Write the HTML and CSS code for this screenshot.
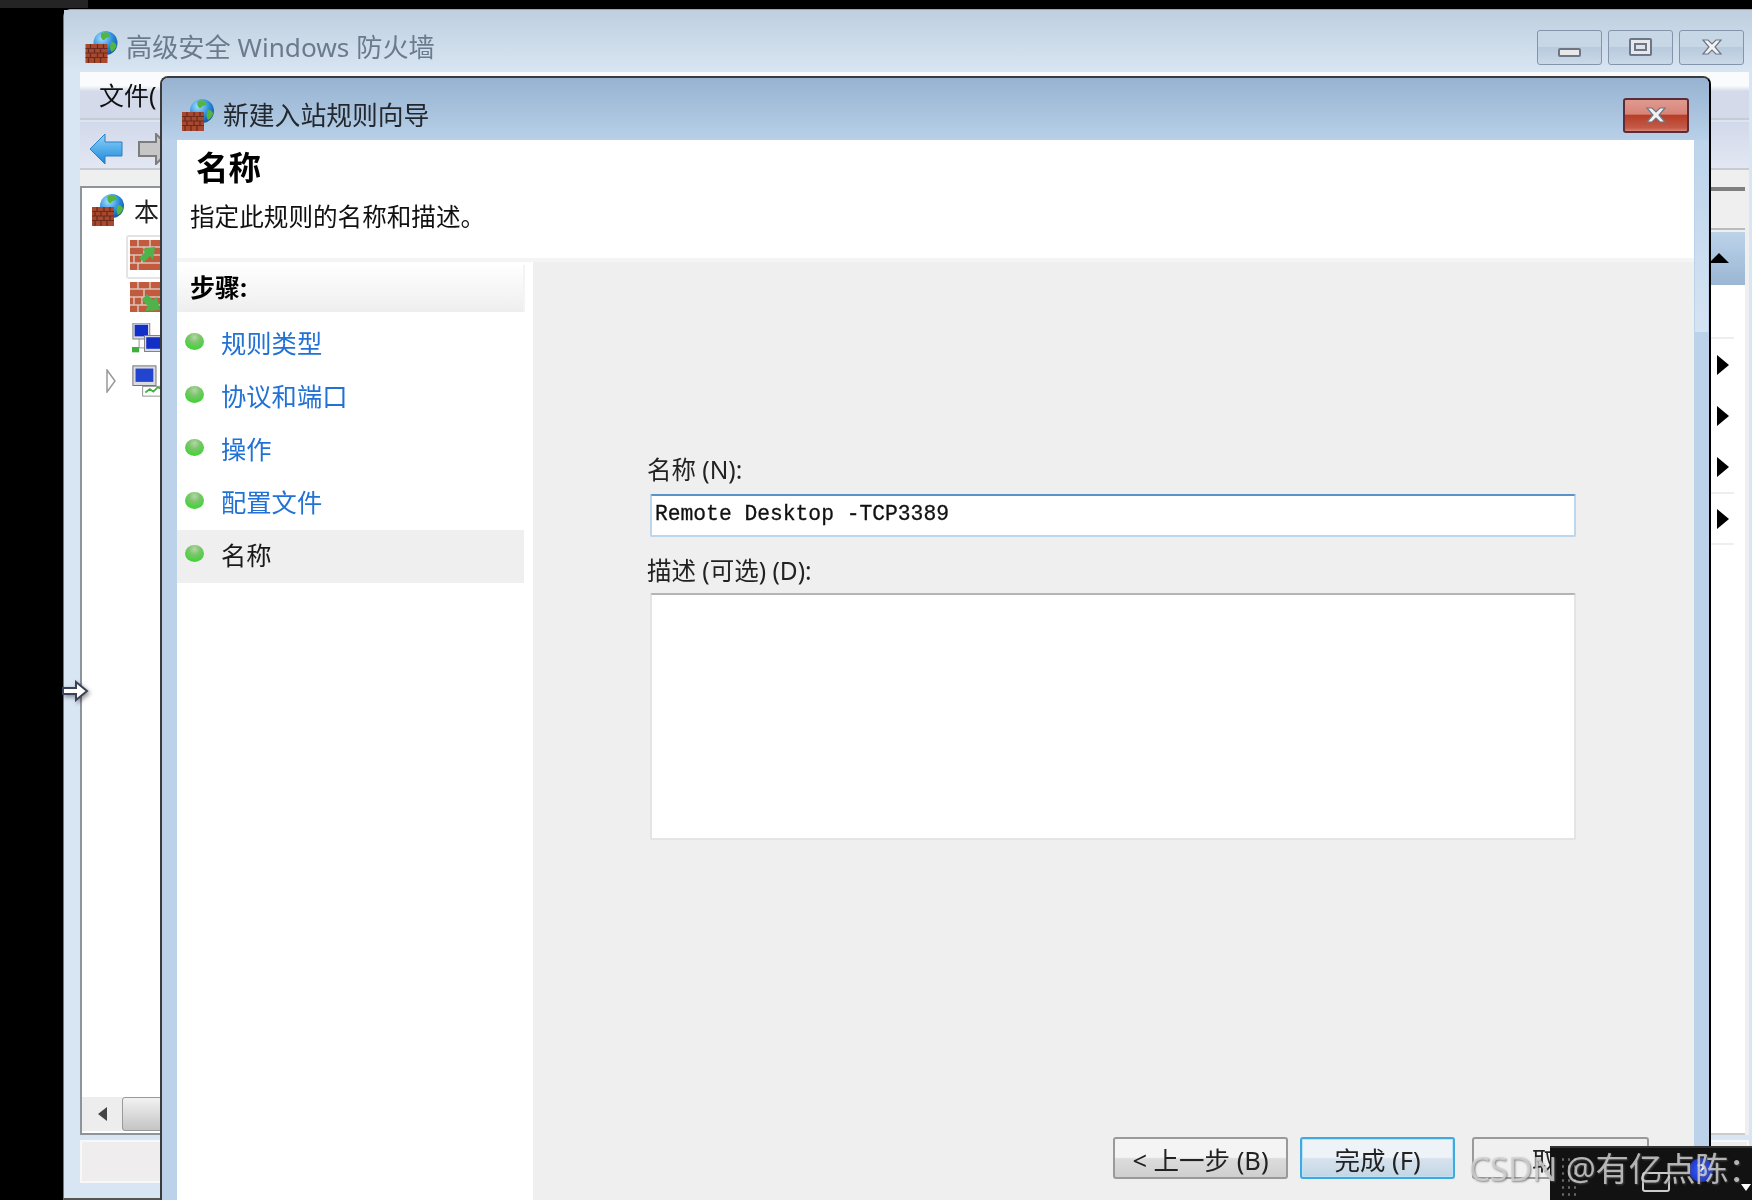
FILE: index.html
```html
<!DOCTYPE html>
<html lang="zh-CN">
<head>
<meta charset="utf-8">
<title>新建入站规则向导</title>
<link rel="stylesheet" href="styles.css">
</head>
<body>
<svg class="defs" width="0" height="0" aria-hidden="true">
  <defs>
    <radialGradient id="globe" cx="0.35" cy="0.3" r="0.8">
      <stop offset="0" stop-color="#a8e0ff"/><stop offset="0.55" stop-color="#2c8fe0"/><stop offset="1" stop-color="#10508f"/>
    </radialGradient>
    <linearGradient id="arrowblue" x1="0" y1="0" x2="0" y2="1">
      <stop offset="0" stop-color="#8fd4fa"/><stop offset="1" stop-color="#1c86d8"/>
    </linearGradient>
    <symbol id="fw" viewBox="0 0 32 32">
      <circle cx="20" cy="12" r="12" fill="url(#globe)"/>
      <path d="M16 2c4-2 8 0 9 3-2 2-5 1-6 4-2 1-5-3-3-7zM26 11c3 0 5 2 5 4-1 3-3 5-5 6-2-3-2-7 0-10z" fill="#55b63f"/>
      <rect x="0" y="13" width="22" height="19" fill="#a8492f"/>
      <path d="M0 17.500h22M0 22h22M0 26.500h22M5 13v4.500M12 13v4.500M18 13v4.500M3 17.500V22M9 17.500V22M15 17.500V22M5 22v4.500M12 22v4.500M18 22v4.500M3 26.500V32M9 26.500V32M15 26.500V32" stroke="#6a2a1c" stroke-width="1.200" fill="none"/>
    </symbol>
    <symbol id="brick-in" viewBox="0 0 36 30">
      <rect width="36" height="30" fill="#c25a3e"/>
      <path d="M0 7h36M0 15h36M0 23h36M8 0v7M20 0v7M14 7v8M4 15v8M12 15v8M8 23v7" stroke="#d9c4ba" stroke-width="1.500" fill="none"/>
      <path d="M12 9l13-2-2 13-3-4-6 6-5-4 6-6z" fill="#4db34a"/>
    </symbol>
    <symbol id="brick-out" viewBox="0 0 36 30">
      <rect width="36" height="30" fill="#c25a3e"/>
      <path d="M0 7h36M0 15h36M0 23h36M8 0v7M20 0v7M14 7v8M4 15v8M12 15v8M8 23v7" stroke="#d9c4ba" stroke-width="1.500" fill="none"/>
      <path d="M30 28l-15 1 3-5-6-6 5-6 6 6 4-3z" fill="#4db34a"/>
    </symbol>
    <symbol id="netpc" viewBox="0 0 36 36">
      <rect x="1" y="0" width="19" height="18" fill="#d8dbe2" stroke="#777"/>
      <rect x="3" y="2" width="15" height="13" fill="#1230c8"/>
      <rect x="14" y="14" width="20" height="18" fill="#d8dbe2" stroke="#777"/>
      <rect x="16" y="16" width="16" height="13" fill="#1230c8"/>
      <rect x="0" y="27" width="8" height="6" fill="#3fae3f"/>
      <path d="M8 18v10h6" stroke="#888" fill="none"/>
    </symbol>
    <symbol id="monpc" viewBox="0 0 36 36">
      <rect x="1" y="1" width="26" height="22" fill="#d8dbe2" stroke="#666"/>
      <rect x="4" y="4" width="20" height="15" fill="#2344cf"/>
      <rect x="12" y="24" width="24" height="11" fill="#fff" stroke="#888"/>
      <path d="M15 31l5-4 4 3 5-5 4 2" stroke="#3fae3f" stroke-width="2" fill="none"/>
    </symbol>
    <symbol id="x" viewBox="0 0 24 16">
      <path d="M3 1h5l4 4 4-4h5l-6 7 6 7h-5l-4-4-4 4H3l6-7z" fill="#f2f2f2" stroke="#6d7686" stroke-width="1.200"/>
    </symbol>
  </defs>
</svg>

<div class="screen">
  <div class="topstrip"></div>

  <section class="win-main">
    <header class="main-title">
      <svg class="ico-title"><use href="#fw"/></svg>
      <span class="main-title-text">高级安全 Windows 防火墙</span>
      <div class="caption">
        <span class="cap-btn"><i class="glyph-min"></i></span>
        <span class="cap-btn"><i class="glyph-max"></i></span>
        <span class="cap-btn"><svg class="glyph-x"><use href="#x"/></svg></span>
      </div>
    </header>
    <div class="main-client">
      <div class="menu-bar"><span class="menu-item">文件(</span></div>
      <div class="tool-bar">
        <svg class="tool-arrow" viewBox="0 0 34 32"><path d="M1 16L16 1v8h17v14H16v8z" fill="url(#arrowblue)" stroke="#2b7fc4"/></svg>
        <svg class="tool-arrow tool-arrow-next" viewBox="0 0 34 32"><path d="M33 16L18 1v8H1v14h17v8z" fill="#c6c6c6" stroke="#7d7d7d" stroke-width="2"/></svg>
      </div>
      <div class="strip"></div>
      <div class="panes">
        <div class="tree">
          <div class="tree-rows">
            <div class="tree-row tree-root"><svg class="ico-root"><use href="#fw"/></svg><span class="tree-label">本</span></div>
            <div class="tree-row tree-sel"><svg class="ico-node"><use href="#brick-in"/></svg></div>
            <div class="tree-row"><svg class="ico-node"><use href="#brick-out"/></svg></div>
            <div class="tree-row"><svg class="ico-node"><use href="#netpc"/></svg></div>
            <div class="tree-row"><svg class="expander" viewBox="0 0 10 24"><path d="M1 1l8 11-8 11z" fill="#fff" stroke="#999" stroke-width="1.500"/></svg><svg class="ico-node"><use href="#monpc"/></svg></div>
          </div>
          <div class="hscroll"><span class="hscroll-arrow"></span><span class="hscroll-thumb"></span></div>
        </div>
        <div class="actions">
          <div class="act-rule"></div>
          <div class="act-grey"></div>
          <div class="act-head"><i class="tri-up"></i></div>
          <div class="act-list">
            <div class="act-row act-row-first"></div>
            <div class="act-row"><i class="tri-right"></i></div>
            <div class="act-row"><i class="tri-right"></i></div>
            <div class="act-row"><i class="tri-right"></i></div>
            <div class="act-row act-row-end"><i class="tri-right"></i></div>
          </div>
        </div>
      </div>
      <div class="status"></div>
    </div>
  </section>

  <svg class="cursor" viewBox="0 0 28 22"><path d="M1 8h13V2l11 9-11 9v-6H1z" fill="#fff" stroke="#3a4258" stroke-width="2"/></svg>

  <section class="dialog">
    <header class="dlg-title">
      <svg class="ico-dlg"><use href="#fw"/></svg>
      <span class="dlg-title-text">新建入站规则向导</span>
      <span class="dlg-close"><svg class="glyph-x-red"><use href="#x"/></svg></span>
    </header>
    <div class="dlg-client">
      <div class="dlg-head">
        <h1 class="dlg-h1">名称</h1>
        <p class="dlg-sub">指定此规则的名称和描述。</p>
      </div>
      <div class="dlg-body">
        <nav class="steps">
          <div class="steps-head"><span class="steps-head-text">步骤:</span></div>
          <ul class="steps-list">
            <li class="step"><i class="dot"></i><span class="step-text step-link">规则类型</span></li>
            <li class="step"><i class="dot"></i><span class="step-text step-link">协议和端口</span></li>
            <li class="step"><i class="dot"></i><span class="step-text step-link">操作</span></li>
            <li class="step"><i class="dot"></i><span class="step-text step-link">配置文件</span></li>
            <li class="step step-current"><i class="dot"></i><span class="step-text">名称</span></li>
          </ul>
        </nav>
        <div class="form-pane">
          <div class="form">
            <div class="form-label">名称 (N):</div>
            <div class="input"><span class="input-text">Remote Desktop -TCP3389</span></div>
            <div class="form-label form-label-2">描述 (可选) (D):</div>
            <div class="textarea"></div>
          </div>
          <div class="buttons">
            <span class="btn">&lt; 上一步 (B)</span>
            <span class="btn btn-default">完成 (F)</span>
            <span class="btn btn-cancel">取</span>
          </div>
        </div>
      </div>
    </div>
  </section>

  <div class="tray">
    <span class="tray-grip"></span>
    <span class="tray-box"></span>
    <span class="tray-help">?</span>
    <i class="tray-caret"></i>
  </div>
  <div class="watermark">CSDN @有亿点陈：</div>
</div>
</body>
</html>
```
FILE: styles.css
```css
* { box-sizing: border-box; }
html, body { margin: 0; padding: 0; background: #000; }
body { width: 1752px; height: 1200px; overflow: hidden; font-family: "Noto Sans", "Noto Sans CJK SC", sans-serif; }
.defs { position: absolute; }
.screen { position: relative; width: 1752px; height: 1200px; overflow: hidden; background: #000; filter: blur(0.7px); }
.topstrip { width: 88px; height: 8px; background: #242424; }

/* main window */
.win-main { position: absolute; left: 63px; top: 9px; width: 1689px; height: 1191px; display: flex; flex-direction: column; background: #d8e5f3; border-left: 1px solid #777; border-top: 1px solid #9aa; border-bottom: 2px solid #555; border-top-left-radius: 8px; }
.main-title { height: 62px; flex: none; display: flex; align-items: center; padding: 12px 0 0 21px; background: linear-gradient(#bfcfdf, #d8e5f3); }
.ico-title { width: 33px; height: 32px; flex: none; }
.main-title-text { margin-left: 8px; font-size: 26.200px; line-height: 34px; color: #6b7b8d; }
.caption { margin-left: auto; margin-right: 8px; display: flex; gap: 6px; }
.cap-btn { width: 65px; height: 35px; display: flex; align-items: center; justify-content: center; border: 1px solid #8494aa; border-radius: 3px; background: linear-gradient(#c8d7e6 50%, #b9cadd 50%, #c9d9e8); }
.glyph-min { display: block; width: 23px; height: 9px; margin-top: 10px; background: #e8e8e8; border: 2px solid #6d7686; border-radius: 2px; }
.glyph-max { display: block; width: 23px; height: 18px; background: #dfe3e8; border: 2px solid #6d7686; border-radius: 2px; position: relative; box-shadow: inset 0 0 0 3px #e6e8ec, inset 0 0 0 5px #6d7686; }
.glyph-x { width: 24px; height: 18px; }
.main-client { flex: 1; min-height: 0; display: flex; flex-direction: column; margin: 0 3px 15px 16px; }
.menu-bar { height: 48px; flex: none; display: flex; align-items: center; padding-left: 19px; background: linear-gradient(#fafbfd 30%, #d4daea 42%, #d4daea); border-bottom: 2px solid #c6cbd6; }
.menu-item { font-size: 25px; line-height: 34px; color: #111; }
.tool-bar { height: 48px; flex: none; display: flex; align-items: center; gap: 15px; padding: 8px 0 0 9px; margin-top: 2px; background: linear-gradient(#d2d9ea, #e2e7f2); border-bottom: 2px solid #c6cbd6; }
.tool-arrow { width: 34px; height: 32px; flex: none; }
.strip { height: 16px; flex: none; background: #efefef; }
.panes { flex: 1; min-height: 0; display: flex; justify-content: space-between; background: #efefef; }
.tree { width: 400px; display: flex; flex-direction: column; background: #fff; border: 2px solid #8f949c; padding-bottom: 2px; }
.tree-rows { display: flex; flex-direction: column; padding-top: 4px; flex: 1; }
.tree-row { height: 42px; display: flex; align-items: center; padding-left: 48px; position: relative; }
.tree-root { padding: 0 0 7px 10px; }
.tree-sel::before { content: ""; position: absolute; left: 44px; top: 1px; width: 200px; height: 40px; border: 2px solid #e4e4e4; border-radius: 3px; }
.ico-root { width: 32px; height: 32px; flex: none; }
.tree-label { margin-left: 10px; font-size: 25px; color: #222; }
.ico-node { width: 36px; height: 32px; flex: none; position: relative; }
.expander { position: absolute; left: 24px; top: 9px; width: 10px; height: 24px; }
.hscroll { height: 34px; flex: none; display: flex; background: #ededed; }
.hscroll-arrow { width: 40px; display: flex; align-items: center; justify-content: center; }
.hscroll-arrow::before { content: ""; border: 7px solid transparent; border-right: 9px solid #444; border-left: 0; }
.hscroll-thumb { flex: 1; border: 1px solid #999; border-radius: 3px; background: linear-gradient(#f2f2f2, #c4c4c4); }
.actions { width: 345px; margin-right: 4px; display: flex; flex-direction: column; flex: none; }
.act-rule { height: 4px; background: #7f7f7f; margin-top: 1px; }
.act-grey { height: 39px; border-bottom: 2px solid #bbb; background: #efefef; }
.act-head { height: 53px; margin-top: 2px; position: relative; background: linear-gradient(#bcd3ea, #9bb6d3); }
.tri-up { position: absolute; right: 16px; top: 21px; border: 10px solid transparent; border-top: 0; border-bottom: 10px solid #000; }
.act-list { flex: 1; background: #fff; border-bottom: 2px solid #ccc; display: flex; flex-direction: column; padding-right: 11px; }
.act-row { height: 51px; display: flex; align-items: center; justify-content: flex-end; padding-right: 5px; }
.act-row-first { height: 54px; border-bottom: 2px solid #eee; }
.act-row-end { border-top: 2px solid #eee; border-bottom: 2px solid #eee; height: 53px; }
.tri-right { border: 10px solid transparent; border-left: 12px solid #000; border-right: 0; }
.status { height: 43px; flex: none; margin-top: 5px; width: 100%; background: #efeded; border: 2px solid #f7f8fa; }

.cursor { position: absolute; left: 62px; top: 680px; width: 28px; height: 22px; filter: drop-shadow(2px 2px 2px rgba(0,0,0,.4)); }

/* dialog */
.dialog { position: absolute; left: 160px; top: 76px; width: 1551px; height: 1124px; display: flex; flex-direction: column; background: #bcd2ea; border: 2px solid #3b3b3b; border-bottom: 0; border-right-color: #000; border-radius: 8px 8px 0 0; }
.dlg-title { height: 62px; flex: none; display: flex; align-items: center; padding: 12px 20px 0 20px; background: linear-gradient(#97b3d1, #b8d0e8); border-radius: 6px 6px 0 0; }
.ico-dlg { width: 32px; height: 32px; flex: none; }
.dlg-title-text { margin-left: 9px; font-size: 25.800px; line-height: 34px; color: #23282e; }
.dlg-close { margin-left: auto; width: 66px; height: 35px; display: flex; align-items: center; justify-content: center; border: 2px solid #5c2c38; border-radius: 3px; background: linear-gradient(#e09a90, #d88478 45%, #b83e25 50%, #c25a48 90%, #d88478); }
.glyph-x-red { width: 24px; height: 18px; }
.dlg-client { flex: 1; min-height: 0; margin: 0 15px; display: flex; flex-direction: column; background: #fff; position: relative; }
.dlg-client::after { content: ""; position: absolute; left: 100%; top: 0; width: 13px; height: 192px; background: linear-gradient(#bcd3ea, #d5e4f3); margin-left: 1px; }
.dlg-head { height: 122px; flex: none; border-bottom: 4px solid #f4f4f4; padding-left: 13px; display: flex; flex-direction: column; }
.dlg-h1 { margin: 7px 0 0 6px; font-size: 32.500px; line-height: 42px; font-weight: 700; color: #000; }
.dlg-sub { margin: 11px 0 0; font-size: 24.600px; line-height: 34px; color: #111; }
.dlg-body { flex: 1; min-height: 0; display: flex; }
.steps { width: 356px; flex: none; padding-top: 3px; border-right: 6px solid #fff; background: #fff; }
.steps-head { height: 47px; display: flex; align-items: center; padding-left: 13px; font-size: 25px; font-weight: 700; color: #000; background: linear-gradient(#fff, #eeeeee); margin-right: 2px; border-right: 2px solid #f4f4f4; }
.steps-head-text { margin-top: -6px; }
.steps-list { list-style: none; margin: 6px 3px 0 0; padding: 0; }
.step { height: 53px; display: flex; align-items: center; padding-left: 8px; font-size: 25.300px; color: #1a1a1a; }
.step-text { margin-top: -6px; }
.step-current { background: #efefef; }
.step-link { color: #2272d6; }
.dot { width: 19px; height: 17px; flex: none; margin-right: 17px; margin-top: -6px; border-radius: 50%; background: radial-gradient(circle at 50% 25%, #b5d6a8 0, #7cc56c 35%, #49d13f 70%, #3fc935 100%); }
.form-pane { flex: 1; min-width: 0; display: flex; flex-direction: column; background: #efefef; }
.form { padding: 191px 0 0 114px; display: flex; flex-direction: column; align-items: flex-start; }
.form-label { font-size: 24.500px; line-height: 34px; color: #222; }
.form-label-2 { margin-top: 17px; }
.input { width: 926px; height: 43px; margin: 7px 0 0 3px; padding-left: 3px; display: flex; align-items: center; font-family: "Liberation Mono", monospace; font-size: 21.300px; color: #111; background: #fff; border: 2px solid #bcd6ec; border-top-color: #5a93c8; border-radius: 2px; }
.input-text { margin-top: -4px; -webkit-text-stroke: 0.3px #111; }
.textarea { width: 926px; height: 247px; margin: 5px 0 0 3px; background: #fff; border: 2px solid #e4e4e4; border-top-color: #b5b5b5; border-radius: 2px; }
.buttons { margin-top: auto; padding: 0 45px 21px 0; display: flex; justify-content: flex-end; }
.btn { width: 175px; height: 42px; display: flex; align-items: center; justify-content: center; font-size: 25.500px; color: #222; border: 2px solid #9a9a9a; border-radius: 3px; background: linear-gradient(#f4f4f4 48%, #dcdcdc 52%, #cfcfcf); }
.btn-default { width: 155px; margin: 0 17px 0 12px; border-color: #3fa9e0; box-shadow: inset 0 0 0 1px #bfe3f6; background: linear-gradient(#eef3f8 48%, #d6e3ee 52%, #c3d6e4); }
.btn-cancel { width: 177px; background: #f0f0f0; justify-content: flex-start; padding-left: 58px; }

/* overlays */
.tray { position: absolute; left: 1550px; top: 1146px; width: 202px; height: 54px; background: #121212; border-top: 2px solid #333; }
.tray-grip { position: absolute; left: 10px; top: 8px; width: 18px; height: 42px; background-image: radial-gradient(circle, #666 1px, transparent 1.500px); background-size: 6px 7px; }
.tray-box { position: absolute; left: 92px; top: 24px; width: 28px; height: 20px; border: 2px solid #ccc; border-radius: 3px; }
.tray-help { position: absolute; left: 139px; top: 10px; width: 24px; height: 24px; display: flex; align-items: center; justify-content: center; border-radius: 50%; background: radial-gradient(circle, #3b5fff, #1528b8); color: #fff; font-size: 16px; font-weight: 700; }
.tray-caret { position: absolute; right: 1px; top: 36px; border: 5px solid transparent; border-top: 7px solid #fff; }
.watermark { position: absolute; left: 1469px; top: 1145px; white-space: nowrap; font-size: 33.500px; line-height: 46px; letter-spacing: -0.300px; color: rgba(214,214,214,.8); text-shadow: 1px 1px 2px rgba(90,90,90,.7); }
```
